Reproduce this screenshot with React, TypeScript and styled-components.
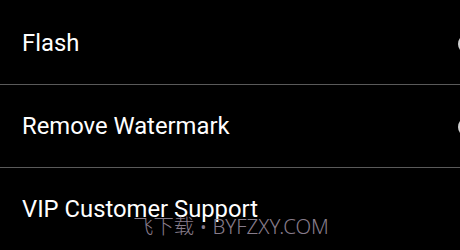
import React from "react";
import styled, { createGlobalStyle } from "styled-components";

const Global = createGlobalStyle`
  html, body { margin: 0; padding: 0; background: #000; }
  body { width: 460px; height: 250px; overflow: hidden; font-family: Roboto, "Noto Sans", sans-serif; }
`;

const Page = styled.div`
  position: relative;
  width: 460px;
  height: 250px;
  background: #000;
  overflow: hidden;
`;

const List = styled.div`
  display: flex;
  flex-direction: column;
  padding-top: 2px;
`;

const Row = styled.div<{ $divider?: boolean }>`
  display: flex;
  align-items: center;
  justify-content: space-between;
  height: 82px;
  padding-left: 22px;
  border-bottom: ${(p) => (p.$divider ? "1px solid #5a5a5a" : "none")};
  flex-shrink: 0;
`;

const Label = styled.span`
  color: #fff;
  font-family: Roboto, sans-serif;
  font-size: 23.8px;
  line-height: 1;
  margin-top: 2px;
`;

const Thumb = styled.span`
  width: 20px;
  height: 20px;
  border-radius: 50%;
  background: #cfcfcf;
  margin-right: -18px;
  margin-top: 2px;
  flex-shrink: 0;
`;

const Watermark = styled.div`
  position: absolute;
  left: 133px;
  top: 215px;
  color: #877c8b;
  font-family: "Noto Sans", "Noto Sans CJK SC", sans-serif;
  font-weight: 300;
  font-size: 20.4px;
  line-height: 22px;
  white-space: nowrap;
`;

const items = [
  { label: "Flash", toggle: true },
  { label: "Remove Watermark", toggle: true },
  { label: "VIP Customer Support", toggle: false },
];

export default function App() {
  return (
    <Page>
      <Global />
      <List>
        {items.map((it, i) => (
          <Row key={it.label} $divider={i < items.length - 1}>
            <Label>{it.label}</Label>
            {it.toggle && <Thumb />}
          </Row>
        ))}
      </List>
      <Watermark>飞下载 • BYFZXY.COM</Watermark>
    </Page>
  );
}
